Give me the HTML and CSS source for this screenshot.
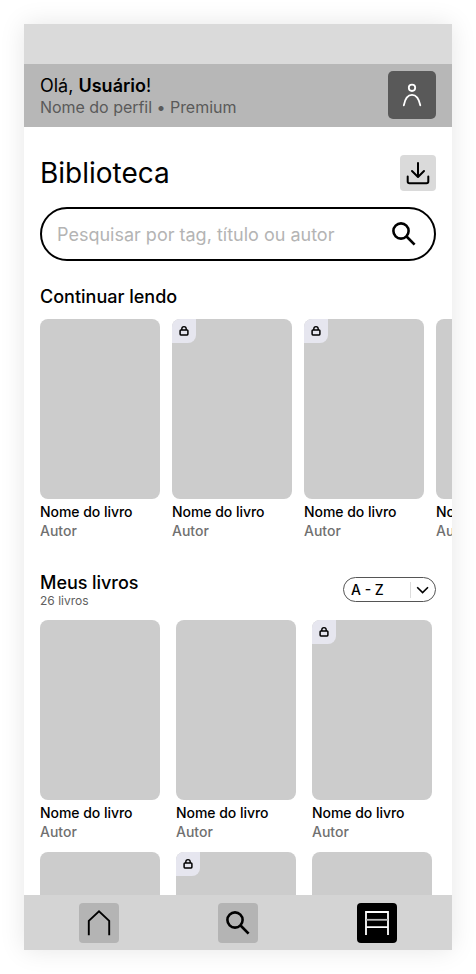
FILE: index.html
```html
<!DOCTYPE html>
<html lang="pt-BR">
<head>
<meta charset="utf-8">
<title>Biblioteca</title>
<link rel="stylesheet" href="styles.css">
</head>
<body>
<svg class="defs" aria-hidden="true">
  <symbol id="lock" viewBox="0 0 24 24">
    <rect x="8.1" y="11" width="7.8" height="4.9" rx="0.8" fill="none" stroke="#000" stroke-width="1.5"/>
    <path d="M9.8 11V9.8a2.2 2.2 0 0 1 4.4 0v1.2" fill="none" stroke="#000" stroke-width="1.4"/>
  </symbol>
  <symbol id="search" viewBox="0 0 32 32">
    <circle cx="13" cy="13" r="7.6" fill="none" stroke="#000" stroke-width="2.6"/>
    <path d="M18.3 18.3L26.6 26.6" fill="none" stroke="#000" stroke-width="2.7"/>
  </symbol>
</svg>
<main class="screen">
  <div class="status"></div>
  <header class="profile">
    <div class="user">
      <p class="hello">Olá, <strong>Usuário</strong>!</p>
      <p class="plan">Nome do perfil • Premium</p>
    </div>
    <button class="avatar" aria-label="Perfil">
      <svg width="48" height="48" viewBox="0 0 48 48" fill="none" stroke="#fff" stroke-width="1.8" stroke-linecap="round">
        <circle cx="24" cy="16.8" r="3.2"/>
        <path d="M15.8 34.3C17 28 19.7 23.8 24 23.8S31 28 32.3 34.3"/>
      </svg>
    </button>
  </header>
  <div class="content">
    <div class="title-row">
      <h1>Biblioteca</h1>
      <button class="download" aria-label="Baixar">
        <svg width="36" height="36" viewBox="0 0 36 36" fill="none" stroke="#000" stroke-width="2" stroke-linecap="round" stroke-linejoin="round">
          <path d="M18 8V21.5M12 16L18 22L24 16M7.7 21.5V26.5Q7.7 28.3 9.5 28.3H26.5Q28.3 28.3 28.3 26.5V21.5"/>
        </svg>
      </button>
    </div>
    <div class="search">
      <span>Pesquisar por tag, título ou autor</span>
      <svg width="32" height="32"><use href="#search"/></svg>
    </div>
    <h2 class="reading-title">Continuar lendo</h2>
    <div class="carousel">
      <article class="book"><div class="cover"></div><h3>Nome do livro</h3><p>Autor</p></article>
      <article class="book"><div class="cover"><svg class="lock"><use href="#lock"/></svg></div><h3>Nome do livro</h3><p>Autor</p></article>
      <article class="book"><div class="cover"><svg class="lock"><use href="#lock"/></svg></div><h3>Nome do livro</h3><p>Autor</p></article>
      <article class="book"><div class="cover"></div><h3>Nome do livro</h3><p>Autor</p></article>
    </div>
    <div class="mine-row">
      <div>
        <h2>Meus livros</h2>
        <p class="count">26 livros</p>
      </div>
      <div class="sort">
        <span>A - Z</span>
        <svg width="25" height="16" viewBox="0 0 25 16" fill="none">
          <path d="M0.5 0V16" stroke="#dcdcdc"/>
          <path d="M7.2 5.2L12.6 10.6L18 5.2" stroke="#000" stroke-width="1.6"/>
        </svg>
      </div>
    </div>
    <div class="shelf">
      <article class="book"><div class="cover"></div><h3>Nome do livro</h3><p>Autor</p></article>
      <article class="book"><div class="cover"></div><h3>Nome do livro</h3><p>Autor</p></article>
      <article class="book"><div class="cover"><svg class="lock"><use href="#lock"/></svg></div><h3>Nome do livro</h3><p>Autor</p></article>
      <article class="book"><div class="cover"></div></article>
      <article class="book"><div class="cover"><svg class="lock"><use href="#lock"/></svg></div></article>
      <article class="book"><div class="cover"></div></article>
    </div>
  </div>
  <nav class="tabs">
    <button class="tab" aria-label="Início">
      <svg width="40" height="40" viewBox="0 0 40 40" fill="none" stroke="#000" stroke-width="1.9"><path d="M9.8 32.3V17.8L20 8.2L30.2 17.8V32.3"/></svg>
    </button>
    <button class="tab" aria-label="Buscar"><svg width="32" height="32"><use href="#search"/></svg></button>
    <button class="tab active" aria-label="Biblioteca">
      <svg width="40" height="40" viewBox="0 0 40 40" fill="none" stroke="#fff" stroke-width="1.8"><path d="M9 32V9H31V32M9 24.2H31"/><path d="M9 16.8H31" stroke="#bbb"/></svg>
    </button>
  </nav>
</main>
</body>
</html>
```

FILE: styles.css
```css
* {
  box-sizing: border-box;
  margin: 0;
  padding: 0;
}

body {
  padding: 24px;
  background: #fff;
  color: #000;
  font-family: Inter, "Liberation Sans", sans-serif;
}

button {
  display: flex;
  flex: none;
  align-items: center;
  justify-content: center;
  border: 0;
}

svg {
  display: block;
  flex: none;
}

.defs {
  position: absolute;
  width: 0;
  height: 0;
}

.screen {
  display: flex;
  flex-direction: column;
  width: 428px;
  height: 926px;
  overflow: hidden;
  background: #fff;
  box-shadow: 0 0 24px rgba(0, 0, 0, 0.1);
}

.status {
  flex: none;
  height: 40px;
  background: #dadada;
}

.profile {
  display: flex;
  flex: none;
  align-items: flex-start;
  justify-content: space-between;
  height: 63px;
  padding: 7px 16px 0;
  background: #b7b7b7;
}

.user {
  padding-top: 4px;
}

.hello {
  font-size: 18px;
  line-height: 22px;
}

.hello strong {
  font-weight: 600;
}

.plan {
  color: #5a5a5a;
  font-size: 16px;
  line-height: 21px;
  letter-spacing: -0.03px;
}

.avatar {
  width: 48px;
  height: 48px;
  border-radius: 5px;
  background: #595959;
}

.content {
  flex: 1;
  min-height: 0;
  overflow: hidden;
  padding: 28px 0 0 16px;
}

.title-row,
.mine-row {
  display: flex;
  align-items: center;
  justify-content: space-between;
  margin-right: 16px;
}

.title-row {
  height: 36px;
}

h1 {
  font-size: 28px;
  font-weight: 400;
  line-height: 34px;
}

.download {
  width: 36px;
  height: 36px;
  border-radius: 4px;
  background: #dadada;
}

.search {
  display: flex;
  align-items: center;
  justify-content: space-between;
  height: 54px;
  margin: 16px 16px 0 0;
  padding: 0 14px 0 15px;
  border: 2px solid #000;
  border-radius: 27px;
  color: #b4b4b4;
  font-size: 18px;
}

h2 {
  font-size: 18px;
  font-weight: 500;
  line-height: 22px;
}

.reading-title {
  margin-top: 25px;
}

.carousel {
  display: flex;
  gap: 12px;
  height: 221px;
  margin-top: 11px;
  overflow: hidden;
}

.book {
  flex: none;
  width: 120px;
}

.cover {
  height: 180px;
  overflow: hidden;
  border-radius: 8px;
  background: #ccc;
}

.lock {
  width: 24px;
  height: 24px;
  border-radius: 0 0 8px 0;
  background: #e6e6ef;
}

h3 {
  margin-top: 3px;
  font-size: 14px;
  font-weight: 500;
  line-height: 19px;
  letter-spacing: -0.04px;
}

.book p {
  margin-bottom: 1px;
  color: #707070;
  font-size: 14px;
  font-weight: 500;
  line-height: 19px;
}

.mine-row {
  height: 37px;
  margin-top: 31px;
}

.mine-row h2 {
  padding-top: 1px;
  letter-spacing: -0.05px;
}

.count {
  color: #606060;
  font-size: 12px;
  line-height: 14px;
}

.sort {
  display: flex;
  align-items: center;
  justify-content: space-between;
  width: 93px;
  height: 25px;
  padding: 0 0 0 7px;
  border: 1px solid #555;
  border-radius: 13px;
  font-size: 14px;
  font-weight: 500;
}

.shelf {
  display: grid;
  grid-template-columns: repeat(3, 120px);
  gap: 10px 16px;
  margin-top: 12px;
}

.tabs {
  display: flex;
  flex: none;
  justify-content: space-between;
  height: 55px;
  padding: 8px 55px 0;
  background: #d4d4d4;
}

.tab {
  width: 40px;
  height: 40px;
  border-radius: 4px;
  background: #b4b4b4;
}

.tab.active {
  background: #000;
}
```
